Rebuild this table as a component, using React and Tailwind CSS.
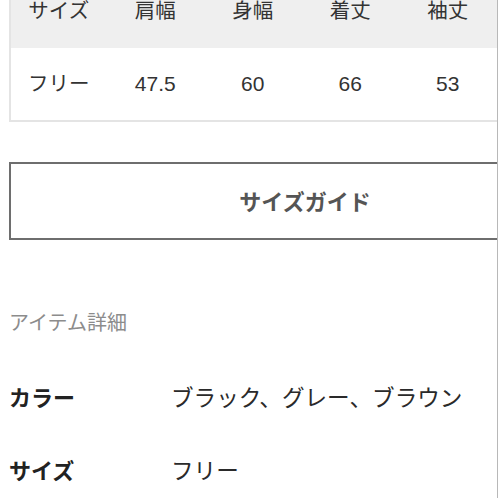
import React from "react";

const jp = { fontFamily: '"Liberation Sans", "Noto Sans CJK JP", sans-serif' };

const head = ["サイズ", "肩幅", "身幅", "着丈", "袖丈"];
const body = ["フリー", "47.5", "60", "66", "53"];

const details = [
  { label: "カラー", value: "ブラック、グレー、ブラウン" },
  { label: "サイズ", value: "フリー" },
];

export default function App() {
  return (
    <div className="w-[498px] h-[498px] bg-white overflow-hidden" style={jp}>
      <div className="w-[498px] h-[498px] border-r border-[#b8b8b8] overflow-hidden pl-[9px]">
        {/* Size table */}
        <div className="-mt-[26px] w-[600px] border-l-2 border-b-2 border-[#e4e4e4]">
          <div className="grid grid-cols-[95.5px_repeat(4,97.5px)] h-[74px] items-center bg-[#efefef] text-[20.5px] text-[#333]">
            {head.map((h) => (
              <div key={h} className="text-center">{h}</div>
            ))}
          </div>
          <div className="grid grid-cols-[95.5px_repeat(4,97.5px)] h-[72px] items-center text-[21px] text-[#333]">
            {body.map((b, i) => (
              <div key={i} className={i === 0 ? "text-center text-[20.5px]" : "text-center"}>{b}</div>
            ))}
          </div>
        </div>

        {/* Size guide button */}
        <button className="mt-[40px] w-[592px] h-[78px] border-2 border-[#6e6e6e] bg-white text-[22px] font-bold text-[#555] flex items-center justify-center pt-[3px]">
          サイズガイド
        </button>

        {/* Item details */}
        <div className="mt-[73px] text-[20px] text-[#8c8c8c] leading-none">アイテム詳細</div>

        <div className="mt-[55px] flex flex-col gap-[51px]">
          {details.map((d) => (
            <div key={d.label} className="flex items-center text-[22px] leading-[22px] text-[#222]">
              <div className="w-[162px] font-bold">{d.label}</div>
              <div className="text-[22.6px] text-[#2a2a2a]">{d.value}</div>
            </div>
          ))}
        </div>
      </div>
    </div>
  );
}
